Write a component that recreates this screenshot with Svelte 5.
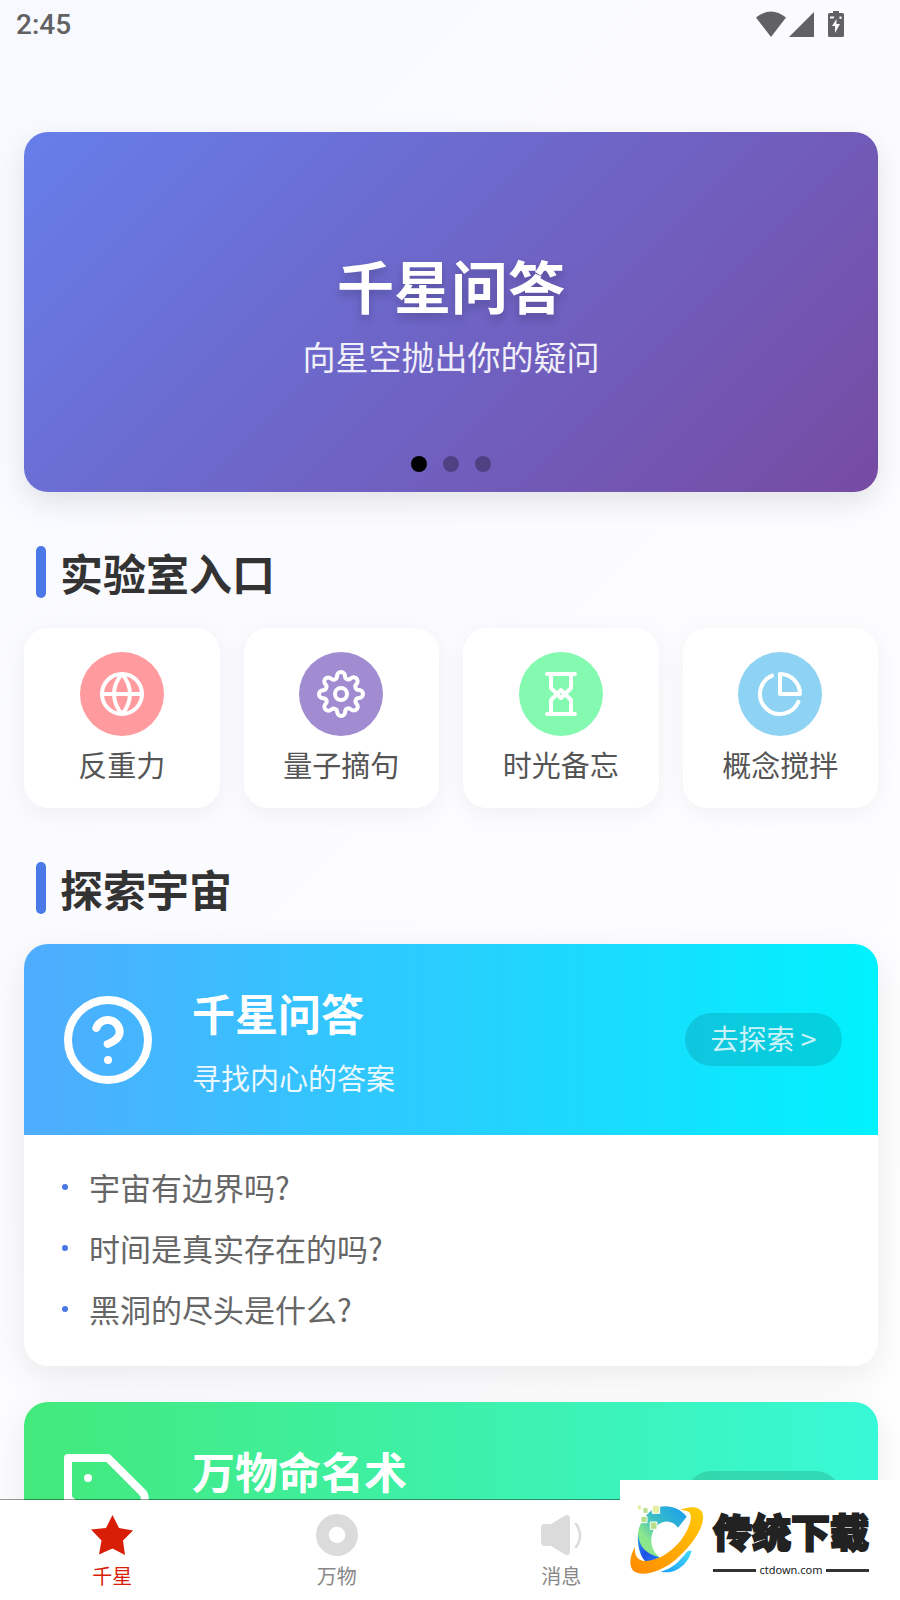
<script lang="ts">
  interface Entry {
    name: string;
    icon: "globe" | "gear" | "hourglass" | "pie";
  }

  interface Topic {
    id: string;
    icon: "help" | "tag";
    title: string;
    subtitle: string;
    more: string;
    questions: string[];
  }

  const entries: Entry[] = [
    { name: "反重力", icon: "globe" },
    { name: "量子摘句", icon: "gear" },
    { name: "时光备忘", icon: "hourglass" },
    { name: "概念搅拌", icon: "pie" },
  ];

  const topics: Topic[] = [
    {
      id: "qa",
      icon: "help",
      title: "千星问答",
      subtitle: "寻找内心的答案",
      more: "去探索 >",
      questions: ["宇宙有边界吗?", "时间是真实存在的吗?", "黑洞的尽头是什么?"],
    },
    { id: "naming", icon: "tag", title: "万物命名术", subtitle: "", more: "", questions: [] },
  ];

  const slides = [
    { title: "千星问答", subtitle: "向星空抛出你的疑问" },
    { title: "", subtitle: "" },
    { title: "", subtitle: "" },
  ];
  let current = $state(0);
</script>

<div class="app">
  <header class="status">
    <span class="status__time">2:45</span>
    <svg class="status__icons" viewBox="0 0 90 28" aria-hidden="true">
      <path d="M1 6.5Q16-5.500 31 6.500L16 26z" />
      <path d="M59 1v25H34z" />
      <path
        fill-rule="evenodd"
        d="M78 2V0h6v2h3.500q1.500 0 1.500 1.500v21q0 1.500-1.500 1.500h-13q-1.500 0-1.500-1.500v-21Q73 2 74.500 2zM81.500 8l-4.500 7h3v7l5-9h-3.500zM75 5.500v2h3.500l1-2zM84.500 5.500v2.500h2V5.500z"
      />
    </svg>
  </header>

  <main class="content">
    <section class="hero">
      <h1 class="hero__title">{slides[current].title}</h1>
      <p class="hero__subtitle">{slides[current].subtitle}</p>
      <div class="hero__dots">
        {#each slides as _, i}
          <button
            class="dot"
            class:dot--active={i === current}
            aria-label={`${i + 1}`}
            onclick={() => (current = i)}
          ></button>
        {/each}
      </div>
    </section>

    <h2 class="section-title">实验室入口</h2>
    <nav class="entries">
      {#each entries as entry}
        <a class="entry" href="#{entry.icon}">
          <span class="entry__icon entry__icon--{entry.icon}">
            <svg class="line-icon" viewBox="0 0 24 24" aria-hidden="true">
              {#if entry.icon === "globe"}
                <circle cx="12" cy="12" r="10" />
                <path d="M2 12h20M12 2a15.300 15.300 0 0 1 4 10 15.300 15.300 0 0 1-4 10 15.300 15.300 0 0 1-4-10 15.300 15.300 0 0 1 4-10z" />
              {:else if entry.icon === "gear"}
                <circle cx="12" cy="12" r="3" />
                <path
                  d="M19.400 15a1.650 1.650 0 0 0 .33 1.820l.06.06a2 2 0 0 1 0 2.830 2 2 0 0 1-2.830 0l-.06-.06a1.650 1.650 0 0 0-1.820-.33 1.650 1.650 0 0 0-1 1.510V21a2 2 0 0 1-2 2 2 2 0 0 1-2-2v-.09A1.650 1.650 0 0 0 9 19.400a1.650 1.650 0 0 0-1.820.33l-.06.06a2 2 0 0 1-2.830 0 2 2 0 0 1 0-2.830l.06-.06a1.650 1.650 0 0 0 .33-1.820 1.650 1.650 0 0 0-1.510-1H3a2 2 0 0 1-2-2 2 2 0 0 1 2-2h.09A1.650 1.650 0 0 0 4.600 9a1.650 1.650 0 0 0-.33-1.820l-.06-.06a2 2 0 0 1 0-2.830 2 2 0 0 1 2.830 0l.06.06a1.650 1.650 0 0 0 1.820.33H9a1.650 1.650 0 0 0 1-1.510V3a2 2 0 0 1 2-2 2 2 0 0 1 2 2v.09a1.650 1.650 0 0 0 1 1.510 1.650 1.650 0 0 0 1.820-.33l.06-.06a2 2 0 0 1 2.830 0 2 2 0 0 1 0 2.830l-.06.06a1.650 1.650 0 0 0-.33 1.820V9a1.650 1.650 0 0 0 1.510 1H21a2 2 0 0 1 2 2 2 2 0 0 1-2 2h-.09a1.650 1.650 0 0 0-1.510 1z"
                />
              {:else if entry.icon === "hourglass"}
                <path d="M5 2h14M5 22h14M17 2v7l-5 5-5-5V2M7 22v-7l5-5 5 5v7" />
              {:else}
                <path d="M21.210 15.890A10 10 0 1 1 8 2.830M22 12A10 10 0 0 0 12 2v10z" />
              {/if}
            </svg>
          </span>
          <span class="entry__name">{entry.name}</span>
        </a>
      {/each}
    </nav>

    <h2 class="section-title">探索宇宙</h2>
    {#each topics as topic}
      <article class="topic">
        <div class="topic__head topic__head--{topic.id}">
          <svg class="line-icon line-icon--large" viewBox="0 0 24 24" aria-hidden="true">
            {#if topic.icon === "help"}
              <circle cx="12" cy="12" r="10" />
              <path d="M9.090 9a3 3 0 0 1 5.830 1c0 2-3 3-3 3M12 17h.01" />
            {:else}
              <path d="M20.590 13.410l-7.170 7.170a2 2 0 0 1-2.830 0L2 12V2h10l8.590 8.590a2 2 0 0 1 0 2.820zM7 7h.01" />
            {/if}
          </svg>
          <div class="topic__text">
            <h3 class="topic__title">{topic.title}</h3>
            <p class="topic__subtitle">{topic.subtitle}</p>
          </div>
          <a class="topic__more" href="#{topic.id}" aria-label={topic.title}>{topic.more}</a>
        </div>
        {#if topic.questions.length}
          <ul class="topic__list">
            {#each topic.questions as question}
              <li>{question}</li>
            {/each}
          </ul>
        {/if}
      </article>
    {/each}
  </main>

  <nav class="tabbar">
    <a class="tab tab--active" href="#star">
      <svg class="tab__icon" viewBox="0 0 42 42" aria-hidden="true">
        <path d="M21.500 1L28 14l14 2.500-10 10L34 41l-12.500-6.500L8 40.500l2.500-14L0 15.500 15 14z" />
      </svg>
      千星
    </a>
    <a class="tab" href="#things">
      <svg class="tab__icon" viewBox="0 0 42 42" aria-hidden="true">
        <path fill-rule="evenodd" d="M21 0a21 21 0 1 0 0 42 21 21 0 1 0 0-42zm0 12.700a8.300 8.300 0 1 1 0 16.600 8.300 8.300 0 1 1 0-16.600z" />
      </svg>
      万物
    </a>
    <a class="tab" href="#messages">
      <svg class="tab__icon" viewBox="0 0 42 42" aria-hidden="true">
        <path d="M5 10h6L25 1.500q5-2 5 3v33q0 5-5 3L11 32H5q-4 0-4-4V14q0-4 4-4z" />
        <path d="M36 10q8 11.500 0 23" fill="none" stroke="currentColor" stroke-width="2.500" stroke-linecap="round" />
      </svg>
      消息
    </a>
  </nav>

  <aside class="brand">
    <svg class="brand__logo" viewBox="0 0 246 240" aria-hidden="true">
      <defs>
        <linearGradient id="brand-c" x1="0" y1="1" x2="1" y2="0">
          <stop offset="0.3" stop-color="#8ce78c" />
          <stop offset="0.55" stop-color="#3bbdc4" />
          <stop offset="1" stop-color="#169cf2" />
        </linearGradient>
        <linearGradient id="brand-ring" x1="0" y1="1" x2="1" y2="0">
          <stop offset="0" stop-color="#ff8a00" />
          <stop offset="1" stop-color="#ffcb05" />
        </linearGradient>
        <linearGradient id="brand-blue" x1="0" y1="0" x2="1" y2="1">
          <stop offset="0" stop-color="#2aa4f5" />
          <stop offset="0.5" stop-color="#1d50e6" />
          <stop offset="1" stop-color="#2b7bf2" />
        </linearGradient>
        <linearGradient id="brand-tail" x1="0" y1="1" x2="1" y2="0">
          <stop offset="0" stop-color="#1c9df2" />
          <stop offset="1" stop-color="#45dcff" />
        </linearGradient>
      </defs>
      <path
        fill="url(#brand-c)"
        d="M182 50C158 18 112 10 80 29 48 48 31 88 36 128c4 32 16 54 37 60l28-16C70 150 68 100 94 76c20-18 46-15 62 7z"
      />
      <path fill="url(#brand-blue)" d="M36 100c2 36 20 62 65 72l-38 17C42 172 34 138 36 100z" />
      <path fill="url(#brand-tail)" d="M197 152c-10 40-50 74-93 63 35-9 57-31 78-59 5-5 9-4 15-4z" />
      <path
        fill="url(#brand-ring)"
        d="M164 29c28-12 64-12 67 17 4 38-34 92-82 133-38 32-92 51-120 38-22-10-20-46-2-76-3 24 7 41 30 42 34 1 72-22 100-53 30-35 48-82 31-95-8-4-15-4-24-6z"
      />
      <g stroke="#fff" stroke-width="3">
        <path fill="#e3f0a0" d="M79 16h22v24H79z" />
        <path fill="#b4df88" d="M51 23h15v17H51zM45 49h18v19H45zM73 66h20v22H73z" />
        <path fill="#e3f0a0" d="M34 15h12v15H34z" />
      </g>
    </svg>
    <div class="brand__text">
      <strong class="brand__name">传统下载</strong>
      <span class="brand__site">ctdown.com</span>
    </div>
  </aside>
</div>

<style>
  :global(body) {
    background: #fff;
  }

  .app {
    display: flex;
    flex-direction: column;
    height: 100vh;
    overflow: hidden;
    font-family: "Noto Sans CJK SC", sans-serif;
    color: #333;
    background: linear-gradient(135deg, #f8f9ff 0%, #fff 100%);
  }

  h1,
  h2,
  h3,
  p,
  ul {
    margin: 0;
    padding: 0;
  }

  a {
    color: inherit;
    text-decoration: none;
  }

  .status {
    display: flex;
    flex: none;
    align-items: center;
    justify-content: space-between;
    height: 50px;
    padding: 0 55px 0 16px;
    color: #616163;
  }

  .status__time {
    font: 500 28px/50px Roboto, sans-serif;
  }

  .status__icons {
    width: 90px;
    height: 28px;
    fill: currentColor;
  }

  .content {
    flex: 1;
    min-height: 0;
    padding: 82px 22px 0 24px;
    overflow-y: auto;
    scrollbar-width: none;
  }

  .hero {
    position: relative;
    display: flex;
    flex-direction: column;
    align-items: center;
    justify-content: center;
    box-sizing: border-box;
    height: 360px;
    border-radius: 24px;
    color: #fff;
    background: linear-gradient(135deg, #667eea 0%, #764ba2 100%);
    box-shadow: 0 10px 28px rgba(0, 0, 0, 0.1);
  }

  .hero__title {
    font-size: 57px;
    line-height: 82px;
    text-shadow: 0 5px 10px rgba(0, 0, 0, 0.2);
  }

  .hero__subtitle {
    margin-top: 6px;
    font-size: 33px;
    line-height: 50px;
    opacity: 0.9;
  }

  .hero__dots {
    position: absolute;
    right: 0;
    bottom: 20px;
    left: 0;
    display: flex;
    gap: 16px;
    justify-content: center;
  }

  .dot {
    width: 16px;
    height: 16px;
    padding: 0;
    border: 0;
    border-radius: 50%;
    background: rgba(0, 0, 0, 0.3);
    cursor: pointer;
  }

  .dot--active {
    background: #000;
  }

  .section-title {
    display: flex;
    gap: 14px;
    align-items: center;
    margin: 54px 0 30px 12px;
    font-size: 43px;
    line-height: 52px;
  }

  .section-title::before {
    width: 10px;
    height: 52px;
    border-radius: 5px;
    background: #4a78e6;
    content: "";
  }

  .entries {
    display: grid;
    grid-template-columns: repeat(4, 1fr);
    gap: 24px;
  }

  .entry {
    display: flex;
    flex-direction: column;
    gap: 8px;
    align-items: center;
    padding: 24px 0;
    border-radius: 24px;
    background: #fff;
    box-shadow: 0 5px 24px rgba(0, 0, 0, 0.05);
  }

  .entry__icon {
    display: flex;
    align-items: center;
    justify-content: center;
    width: 84px;
    height: 84px;
    border-radius: 50%;
  }

  .entry__icon--globe {
    background: #ff9a9e;
  }

  .entry__icon--gear {
    background: #a18cd1;
  }

  .entry__icon--hourglass {
    background: #84fab0;
  }

  .entry__icon--pie {
    background: #8fd3f4;
  }

  .entry__name {
    font-size: 29px;
    line-height: 40px;
    color: #555;
  }

  .line-icon {
    flex: none;
    width: 48px;
    height: 48px;
    fill: none;
    stroke: #fff;
    stroke-width: 2;
    stroke-linecap: round;
    stroke-linejoin: round;
  }

  .line-icon--large {
    width: 96px;
    height: 96px;
  }

  .topic {
    margin-bottom: 36px;
    overflow: hidden;
    border-radius: 24px;
    background: #fff;
    box-shadow: 0 10px 36px rgba(0, 0, 0, 0.08);
  }

  .topic__head {
    display: flex;
    gap: 36px;
    align-items: center;
    padding: 36px;
    color: #fff;
  }

  .topic__head--qa {
    background: linear-gradient(90deg, #4facfe 0%, #00f2fe 100%);
  }

  .topic__head--naming {
    background: linear-gradient(90deg, #43e97b 0%, #38f9d7 100%);
  }

  .topic__text {
    flex: 1;
  }

  .topic__title {
    font-size: 43px;
    line-height: 64px;
  }

  .topic__subtitle {
    min-height: 43px;
    margin-top: 12px;
    font-size: 29px;
    line-height: 43px;
    opacity: 0.9;
  }

  .topic__more {
    box-sizing: border-box;
    min-width: 157px;
    min-height: 53px;
    padding: 4px 24px 6px;
    border-radius: 27px;
    font-size: 28px;
    line-height: 43px;
    text-align: center;
    color: rgba(255, 255, 255, 0.8);
    background: rgba(0, 0, 0, 0.12);
  }

  .topic__list {
    padding: 21px 36px 27px;
    font-size: 31px;
    line-height: 61px;
    color: #666;
    list-style: none;
  }

  .topic__list li {
    display: flex;
    gap: 21px;
    align-items: center;
    padding-left: 2px;
  }

  .topic__list li::before {
    width: 6px;
    height: 6px;
    border-radius: 50%;
    background: #4a78e6;
    content: "";
  }

  .tabbar {
    z-index: 1;
    display: grid;
    flex: none;
    grid-template-columns: repeat(4, 1fr);
    height: 101px;
    margin-top: -1px;
    padding-right: 2px;
    border-top: 1px solid rgba(0, 0, 0, 0.4);
    box-sizing: border-box;
    background: #fff;
    background-clip: padding-box;
  }

  .tab {
    display: flex;
    flex-direction: column;
    gap: 5px;
    align-items: center;
    padding-top: 14px;
    font-size: 20px;
    line-height: 30px;
    color: #888;
  }

  .tab--active {
    color: #d81e06;
  }

  .tab__icon {
    width: 42px;
    height: 42px;
    color: #dbdbdb;
    fill: currentColor;
  }

  .tab--active .tab__icon {
    color: #d81e06;
  }

  .brand {
    position: fixed;
    right: 0;
    bottom: 0;
    z-index: 2;
    display: flex;
    gap: 5px;
    box-sizing: border-box;
    width: 280px;
    height: 120px;
    padding: 20px 31px 20px 6px;
    color: #222;
    background: #fff;
  }

  .brand__logo {
    flex: none;
    width: 82px;
    height: 80px;
  }

  .brand__text {
    flex: 1;
    text-align: center;
  }

  .brand__name {
    display: block;
    font-size: 39px;
    font-weight: 900;
    line-height: 60px;
    white-space: nowrap;
    -webkit-text-stroke: 2px #222;
  }

  .brand__site {
    display: flex;
    gap: 3px;
    align-items: center;
    font-family: "Noto Sans", sans-serif;
    font-size: 11px;
    line-height: 20px;
  }

  .brand__site::before,
  .brand__site::after {
    flex: 1;
    height: 3px;
    background: #333;
    content: "";
  }
</style>
